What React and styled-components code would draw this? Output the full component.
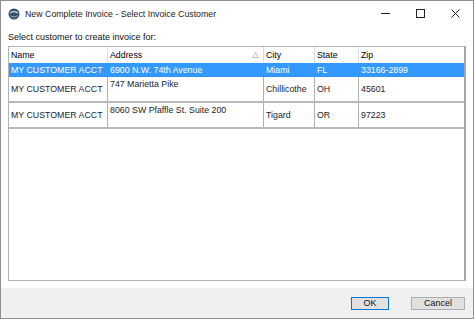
import React from 'react';
import styled, { createGlobalStyle } from 'styled-components';

const GlobalStyle = createGlobalStyle`
    html, body {
        margin: 0;
        padding: 0;
        background: #ffffff;
    }
    * {
        box-sizing: border-box;
    }
`;

const customers = [
    { name: 'MY CUSTOMER ACCT', address: '6900 N.W. 74th Avenue', city: 'Miami', state: 'FL', zip: '33166-2899' },
    { name: 'MY CUSTOMER ACCT', address: '747 Marietta Pike', city: 'Chillicothe', state: 'OH', zip: '45601' },
    { name: 'MY CUSTOMER ACCT', address: '8060 SW Pfaffle St. Suite 200', city: 'Tigard', state: 'OR', zip: '97223' }
];

const columns = '99px 156px 51px 44px 1fr';

function App() {
    return (
        <>
            <GlobalStyle />
            <Window>
                <TitleBar>
                    <AppIcon width='12' height='12' viewBox='0 0 12 12'>
                        <circle cx='6' cy='6' r='5.5' fill='#33506f' />
                        <path d='M2.2 5.2 C3.5 3.2 8.5 3.2 9.8 5.2' stroke='#dfe6ee' strokeWidth='1.3' fill='none' />
                        <path d='M2.5 7.6 C4 9.4 8 9.4 9.5 7.6' stroke='#9fb1c4' strokeWidth='1' fill='none' />
                    </AppIcon>
                    <Title>New Complete Invoice - Select Invoice Customer</Title>
                    <Controls>
                        <Control>
                            <svg width='9' height='9' viewBox='0 0 9 9'>
                                <line x1='0' y1='4.5' x2='9' y2='4.5' stroke='#222' strokeWidth='1' />
                            </svg>
                        </Control>
                        <Control>
                            <svg width='9' height='9' viewBox='0 0 9 9'>
                                <rect x='0.5' y='0.5' width='8' height='8' stroke='#222' strokeWidth='1' fill='none' />
                            </svg>
                        </Control>
                        <Control>
                            <svg width='9' height='9' viewBox='0 0 9 9'>
                                <path d='M0.5 0.5 L8.5 8.5 M8.5 0.5 L0.5 8.5' stroke='#222' strokeWidth='1' />
                            </svg>
                        </Control>
                    </Controls>
                </TitleBar>

                <Body>
                    <Prompt>Select customer to create invoice for:</Prompt>
                    <Grid>
                        <HeaderRow>
                            <HeadCell>Name</HeadCell>
                            <HeadCell>
                                Address
                                <SortMark width='7' height='6' viewBox='0 0 7 6'>
                                    <path d='M3.5 0.5 L6.5 5.5 L0.5 5.5 Z' stroke='#b0b0b0' strokeWidth='0.8' fill='none' />
                                </SortMark>
                            </HeadCell>
                            <HeadCell>City</HeadCell>
                            <HeadCell>State</HeadCell>
                            <HeadCell $last>Zip</HeadCell>
                        </HeaderRow>
                        {customers.map((c, i) => (
                            <Row key={i} $selected={i === 0}>
                                <Cell $selected={i === 0}>{c.name}</Cell>
                                <Cell $selected={i === 0} $top={i !== 0}>{c.address}</Cell>
                                <Cell $selected={i === 0}>{c.city}</Cell>
                                <Cell $selected={i === 0}>{c.state}</Cell>
                                <Cell $selected={i === 0} $last>{c.zip}</Cell>
                            </Row>
                        ))}
                    </Grid>
                </Body>

                <Footer>
                    <Button $default>OK</Button>
                    <Button>Cancel</Button>
                </Footer>
            </Window>
        </>
    );
}

const Window = styled.div`
    width: 474px;
    height: 319px;
    border: 1px solid #8f8f8f;
    background: #ffffff;
    display: flex;
    flex-direction: column;
    font-family: 'Liberation Sans', Arial, sans-serif;
    color: #000;
`;

const TitleBar = styled.div`
    height: 27px;
    display: flex;
    align-items: center;
    padding-left: 7px;
`;

const AppIcon = styled.svg`
    flex: none;
    margin-top: -2px;
`;

const Title = styled.span`
    margin-left: 5px;
    font-size: 8.8px;
    color: #1a1a1a;
    margin-top: -2px;
`;

const Controls = styled.div`
    margin-left: auto;
    display: flex;
    height: 100%;
`;

const Control = styled.div`
    width: 35px;
    display: flex;
    align-items: center;
    justify-content: center;
    padding-bottom: 3px;
`;

const Body = styled.div`
    flex: 1;
    display: flex;
    flex-direction: column;
    padding: 3px 7px 7px 7px;
    min-height: 0;
`;

const Prompt = styled.div`
    font-size: 9px;
    line-height: 12px;
    height: 12px;
    margin-bottom: 3px;
    color: #111;
`;

const Grid = styled.div`
    flex: 1;
    border: 1px solid #b4b4b4;
    border-right: 2px solid #a6a6a6;
    background: #ffffff;
`;

const HeaderRow = styled.div`
    display: grid;
    grid-template-columns: ${columns};
    height: 16px;
`;

const HeadCell = styled.div`
    display: flex;
    align-items: center;
    padding-left: 2px;
    font-size: 8.8px;
    border-right: ${(p) => (p.$last ? 'none' : '1px solid #dcdcdc')};
    position: relative;
`;

const SortMark = styled.svg`
    position: absolute;
    right: 4px;
    top: 5px;
`;

const Row = styled.div`
    display: grid;
    grid-template-columns: ${columns};
    height: ${(p) => (p.$selected ? '14px' : '26px')};
    background: ${(p) => (p.$selected ? '#3399ff' : '#ffffff')};
    border-bottom: ${(p) => (p.$selected ? '1px dotted #9a7a52' : '2px solid #b9b9b9')};
`;

const Cell = styled.div`
    display: flex;
    align-items: ${(p) => (p.$top ? 'flex-start' : 'center')};
    padding: ${(p) => (p.$top ? '2px 0 0 2px' : '0 0 0 2px')};
    font-size: 8.8px;
    color: ${(p) => (p.$selected ? '#ffffff' : '#1b1b2b')};
    border-right: ${(p) => (p.$selected || p.$last ? 'none' : '1px solid #b0b0b0')};
    white-space: nowrap;
    overflow: hidden;
`;

const Footer = styled.div`
    height: 30px;
    background: #f0f0f0;
    display: flex;
    align-items: center;
    justify-content: flex-end;
    gap: 22px;
    padding-right: 8px;
`;

const Button = styled.button`
    height: 13px;
    width: ${(p) => (p.$default ? '38px' : '54px')};
    padding: 0;
    background: #e1e1e1;
    border: 1px solid ${(p) => (p.$default ? '#0078d7' : '#adadad')};
    font-family: 'Liberation Sans', Arial, sans-serif;
    font-size: 9px;
    line-height: 11px;
    color: #111;
`;

export default App;
